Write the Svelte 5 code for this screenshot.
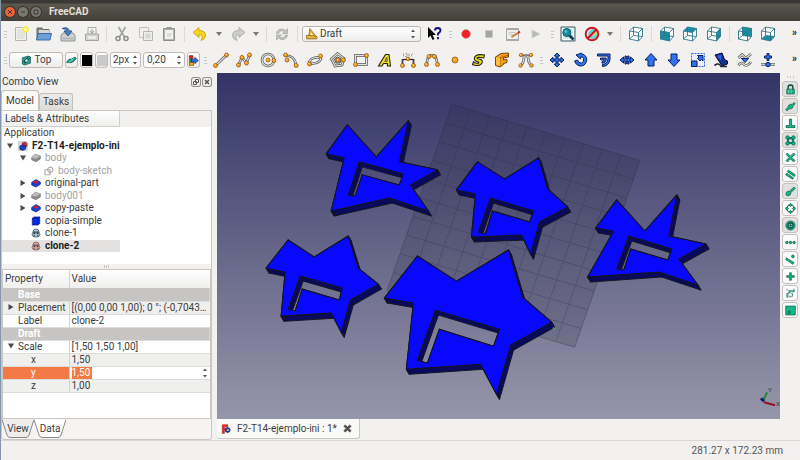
<script lang="ts">
  type Point = [number, number];

  interface Solid {
    outline: Point[];
    hole: Point[];
  }

  interface TreeItem {
    label: string;
    icon: string;
    depth: number;
    arrow?: "open" | "closed";
    hidden?: boolean;
    bold?: boolean;
  }

  let line = $state("2px");
  let textSize = $state("0,20");
  let scaleY = $state("1,50");
  let selected = $state("clone-2");

  const node = (x: number, y: number, r = 2) =>
    `<circle cx="${x}" cy="${y}" r="${r}" fill="#f9a11b" stroke="#8a4a00" stroke-width=".7"/><circle cx="${x - 0.5}" cy="${y - 0.6}" r=".7" fill="#ffe08a"/>`;

  const wire = (d: string) =>
    `<path d="${d}" fill="none" stroke="#55585a" stroke-width="2.6"/><path d="${d}" fill="none" stroke="#dfe1de" stroke-width="1.2"/>`;

  const cube = (face: string) =>
    `<path d="M1.500 5L5.500 1L14.500 2.500V10.500L10.500 15L1.500 13Z" fill="#fff"/>${face}<path d="M1.500 5L10.500 6.500V15L1.500 13ZM1.500 5L5.500 1L14.500 2.500L10.500 6.500M14.500 2.500V10.500L10.500 15M5.500 1V9.500L1.500 13M5.500 9.500L14.500 10.500" fill="none" stroke="#2d7688" stroke-width=".9"/>`;

  const blue = `fill="#2f74ee" stroke="#0b1c5e" stroke-width="1" stroke-linejoin="round"`;
  const green = `fill="#12b886" stroke="#08463a" stroke-width=".9" stroke-linejoin="round"`;

  const icons: Record<string, string> = {
    new: `<path d="M2.500 1.500h11v13h-11z" fill="#f2f2f0" stroke="#b4b4b0"/><path d="M4 3h8v10H4z" fill="#e3e3e0"/><circle cx="12.500" cy="3.500" r="3.200" fill="#f7ee3c"/><circle cx="12.500" cy="3.500" r="1.300" fill="#fffde0"/>`,
    open: `<path d="M1 13V2h5l1 1.500h6V13z" fill="#8a8c88" stroke="#666"/><path d="M3 4h10v5H3z" fill="#d8d8d6"/><path d="M.5 14l1.500-6.500h13.500L14 14z" fill="#6f9fd8" stroke="#3a6aa8"/>`,
    save: `<path d="M1 9.500L3 7h10l2 2.500V15H1z" fill="#d0d1cf" stroke="#8e908c"/><path d="M2.500 11.500h11v2h-11z" fill="#b6b8b4"/><path d="M2 2.500Q8 0 9.500 5H12L8 10L4 5h2.500Q6 2.500 2 2.500z" fill="#4a80c0" stroke="#204a87" stroke-width=".8"/>`,
    print: `<path d="M4 8V1.500h8V8" fill="#f4f4f3" stroke="#aaa"/><path d="M8 3v4M6 5l2 2.500L10 5" fill="none" stroke="#999"/><path d="M1.500 8h13v6.500h-13z" fill="#d4d4d2" stroke="#a2a29f"/><path d="M4 10.500h8v2H4z" fill="#f5f5f5"/>`,
    cut: `<path d="M4.500 1l6 10M11.500 1l-6 10" stroke="#a2a4a1" stroke-width="1.700"/><circle cx="4" cy="12.500" r="2" fill="none" stroke="#8b8d89" stroke-width="1.500"/><circle cx="12" cy="12.500" r="2" fill="none" stroke="#8b8d89" stroke-width="1.500"/>`,
    copy: `<path d="M1.500 1.500h9v10h-9z" fill="#f0f0ef" stroke="#c3c3c1"/><path d="M5.500 5.500h9v9h-9z" fill="#eee" stroke="#b5b5b2"/><path d="M7.500 7.500h5v5h-5z" fill="#d6d6d4"/>`,
    paste: `<path d="M2.500 2.500h11v12h-11z" fill="#b5b5b2" stroke="#8d8d8a"/><path d="M4 4h8v9H4z" fill="#f1f1f0"/><path d="M5.500 1h5v2.500h-5z" fill="#999"/><path d="M6 8h5M6 10h4" stroke="#c8c8c6"/>`,
    undo: `<path d="M1 6.500L7 1.500V4.500Q14 4.500 13.500 10Q13 13.500 9 14.500Q12 9 7 8.500V11.500Z" fill="#f5d327" stroke="#d2a600" stroke-width=".9"/>`,
    redo: `<path d="M15 6.500L9 1.500V4.500Q2 4.500 2.500 10Q3 13.500 7 14.500Q4 9 9 8.500V11.500Z" fill="#ccc" stroke="#adadab" stroke-width=".9"/>`,
    refresh: `<path d="M2.500 7.500Q3 3 8 3Q10 3 11.500 4.500L13.500 2.500V7.500H8.500L10.500 5.500Q6 3.500 4.500 7.500ZM13.500 9Q13 13.500 8 13.500Q6 13.500 4.500 12L2.500 14V9H7.500L5.500 11Q10 13 11.500 9Z" fill="#c3c4c2" stroke="#a2a3a0" stroke-width=".7"/>`,
    whats: `<path d="M2 1v11l2.600-2.500L6.500 14l2-1-2-4H10z" fill="#000"/><path d="M9 4.500Q9 2 11.700 2Q14.500 2 14.500 4.500Q14.500 6 12 7.500V9.500M12 11v2.200" fill="none" stroke="#12127c" stroke-width="1.900"/>`,
    record: `<circle cx="8" cy="8" r="4.300" fill="#ed2323" stroke="#d66" stroke-width=".6"/>`,
    stop: `<path d="M4.500 4.500h7v7h-7z" fill="#a5a6a4" stroke="#c9c9c7"/>`,
    macro: `<path d="M1.500 3h12v11h-12z" fill="#eeeeec" stroke="#a8a8a5"/><path d="M1.500 2h12v2h-12zM1 13h13v2H1z" fill="#aaa"/><path d="M3.500 6.500h7M3.500 8.500h5" stroke="#c8c8c5"/><path d="M6.500 11L14 6.500" stroke="#c17b38" stroke-width="1.900"/><path d="M13 7l2-1.300" stroke="#cc3322" stroke-width="2"/>`,
    play: `<path d="M4 4l8 4-8 4z" fill="#b9bab8" stroke="#cfcfcd"/>`,
    fit: `<path d="M1 1h14v14H1z" fill="#d7eaee" stroke="#42616b"/><path d="M3 2.500h10M3 13.500h10M2.500 3v10M13.500 3v10" stroke="#fff"/><path d="M9 9l4.500 4.500" stroke="#08444f" stroke-width="2.700"/><circle cx="6.800" cy="6.500" r="4" fill="#178ea3" stroke="#0c5667"/><circle cx="5.800" cy="5.500" r="1.400" fill="#54c1cf"/>`,
    style: `<path d="M4.500 6l4-3.500 4.500 2v6l-4 3-4.500-2z" fill="#64d0de"/><path d="M8 6h6l-5 5z" fill="#efd65d"/><circle cx="8" cy="8" r="6.300" fill="none" stroke="#ca171d" stroke-width="1.900"/><path d="M3.500 12.500l9-9" stroke="#ca171d" stroke-width="1.900"/>`,
    iso: cube(""),
    front: cube(`<path d="M1.500 5L10.500 6.500V15L1.500 13Z" fill="#198da3"/>`),
    top: cube(`<path d="M1.500 5L5.500 1L14.500 2.500L10.500 6.500Z" fill="#198da3"/>`),
    right: cube(`<path d="M10.500 6.500L14.500 2.500V10.500L10.500 15Z" fill="#198da3"/>`),
    rear: cube(`<path d="M5.500 1L14.500 2.500V10.500L5.500 9.500Z" fill="#198da3"/>`),
    bottom: cube(`<path d="M1.500 13L5.500 9.500L14.500 10.500L10.500 15Z" fill="#198da3"/>`),
    line: wire("M2.500 13.500L13.500 3") + node(2.5, 13.5) + node(13.5, 3),
    polyline: wire("M2.500 13L6 5.500L10.500 11L13.500 3") + node(2.5, 13) + node(6, 5.5) + node(10.5, 11) + node(13.5, 3),
    circle: wire("M14 8A6 6 0 1 1 2 8A6 6 0 1 1 14 8") + node(8, 8) + node(14, 8.5),
    arc: wire("M2.500 3.500Q12 3.500 13 13") + node(2.5, 3) + node(4, 8) + node(13.2, 13.5),
    ellipse: wire("M2 11Q3 6 9 5.500Q14 5 14 7Q12 11 6 11.500Q2.500 12 2 11") + node(13.5, 4) + node(2.5, 12),
    polygon: wire("M7.500 1.500L14 6.500L12 13L5 14L1.500 7Z") + `<path d="M7.500 5l3.500 2-1 4H6L4.500 7z" fill="#bbb" stroke="#555"/>` + node(8, 8) + node(13.5, 8),
    rect: wire("M2.500 3.500H13.500V12.500H2.500Z") + node(13.5, 3.5) + node(2.5, 12.5),
    text: `<path d="M1.500 14L8.500 2.500H12L13.500 14H10.500L10.300 11.500H6.500L5 14Z" fill="#f0dc1c" stroke="#222" stroke-width="1.100"/><path d="M7.800 9.300L9.800 5.500L10.100 9.300Z" fill="#fff" stroke="#222" stroke-width=".8"/>`,
    dimension: `<path d="M2.500 13V7M13.500 13V7" stroke="#444" stroke-width="1.800"/><path d="M3.500 1.500v3M5.500 1.500h1.500v3h-2M9 1.500v3M11 4.500l1.500-3" stroke="#999" stroke-width=".9" fill="none"/><path d="M3 7.500h10" stroke="#222" stroke-width="1.200"/>` + node(8, 7, 1.7) + node(2.5, 13.5) + node(13.5, 13.5),
    bspline: wire("M2.500 13Q3.500 3 8 3Q12.500 3 13.500 13") + node(2.5, 12.5) + node(5, 4.5) + node(10.5, 4.5) + node(13.5, 12.5),
    point: node(8, 8, 3),
    shapestring: `<path d="M13.500 3L12.800 6L9.500 5.500Q6 5 6 6.200Q6.500 7 9 7.300Q12 8 11 11Q9.500 13.800 5.500 13.500Q3 13.500 1.500 12.500L2.500 9.800Q4 11.200 6.500 11.200Q8.500 11 7.500 10Q2.500 9 3.500 5.500Q4.500 2.800 9 2.600Q12 2.500 13.500 3Z" fill="#f0dc1c" stroke="#222" stroke-width="1.100"/>`,
    facebinder: `<path d="M1.500 5L7 1.500L14.500 1V5L9.500 6V8L13 7.500V10.500L9.500 11.500V12.500L6 15L1.500 13.500Z" fill="#f0a019" stroke="#7a4300"/><path d="M6 15V6L14.500 3" fill="none" stroke="#a35d00"/><path d="M2 5.500L6 6.500V14L2 13Z" fill="#ffbf3c"/>`,
    bezier: wire("M2.500 13.500Q6 11 6 4.500Q8 3 10 4.500Q10 11 13.500 13.500") + `<path d="M2.500 3h11" stroke="#666"/>` + node(3, 3, 1.7) + node(13, 3, 1.7) + node(2.5, 13.5, 1.7) + node(13.5, 13.5, 1.7),
    move: `<path d="M8 1l2.700 3H9v3h3V5.300L15 8l-3 2.700V9H9v3h1.700L8 15l-2.700-3H7V9H4v1.700L1 8l3-2.700V7h3V4H5.300z" ${blue}/>`,
    rotate: `<path d="M8 1.500Q15 3.500 13.500 9.500Q11.500 15 6 13.800Q2.500 12.500 1.500 9L4.500 8Q5.500 11.500 8.500 11Q11.500 9.500 10.500 6.500Q9.500 5 8 4.700L7.500 7L3 3L8.500 1z" ${blue}/>`,
    offset: `<path d="M1.500 2H14V7.500Q13 14 6.500 14.500V12.500Q11.500 11.500 12 7V4H1.500ZM4.500 6H10.200V8Q9.500 11 6 11.200V9.500Q8 9 8.200 7.800H4.500Z" ${blue}/>`,
    trimex: `<path d="M1 8l3.500-3v2H6V4h1.300v3h1.400V4H10v3h1.500V5L15 8l-3.500 3V9H10v3H8.700V9H7.300v3H6V9H4.500v2z" ${blue}/>`,
    up: `<path d="M8 1.500L14 8h-3v6H5V8H2z" ${blue}/>`,
    down: `<path d="M8 14.500L2 8h3V2h6v6h3z" ${blue}/>`,
    scale: `<path d="M1.500 1.500h13v13h-13z" fill="#eaf1fe" stroke="#2f64dc" stroke-dasharray="2 1"/><path d="M1.500 9h5.500v5.500H1.500z" ${blue}/><path d="M7.500 6.500L9 5L7.500 3.500H13V9L11.500 7.500L10 9z" ${blue}/>`,
    edit: `<path d="M2 3L9 1L11.500 7.500L14.500 9V12L9 14L6.500 10Z" fill="#16308f" stroke="#070d3d"/><path d="M4 4L8 8.500L8.500 2.500Z" fill="#3064e8"/><path d="M1.500 13.500Q6 10 8 14.500H14" fill="none" stroke="#26282d" stroke-width="1.700"/>`,
    wiretospline: wire("M1.500 6L5 2.500L9 6L14 2") + wire("M1.500 13.500Q4 9 7 12.500Q10 15 14 10") + `<path d="M4.500 6.500h7L8 10.500z" ${blue}/>`,
    addpoint: `<path d="M1 12.500h14" stroke="#6d6f70" stroke-width="2.600"/><path d="M1 12.500h14" stroke="#c8cac9" stroke-width="1"/><path d="M7 1.500h2v2.500h2.500v2H9v2.500H7V6H4.500V4H7z" ${blue}/><circle cx="8" cy="12.500" r="2.200" ${blue}/>`,
    plane: `<path d="M2 4L11 1.500L14 3L13.500 12L5 14.500L2 13Z" fill="#2aa59a" stroke="#0c4d4b"/><path d="M11 2L4 9L6 12L13 4" fill="none" stroke="#083b3f" stroke-width="1.400"/><circle cx="8" cy="8" r="2.300" fill="#f0f4f2" stroke="#0c4d4b"/>`,
    pen: `<path d="M1 11Q3 5 8 6L13 3L15 5L11 9.500Q7 12 4 11Z" fill="#18a18c" stroke="#0a5045"/><path d="M4 10.500L11 5.500" stroke="#bff" />`,
    apply: `<path d="M2 1h5v4H2z" fill="#e22" stroke="#611"/><path d="M2 6h4v4H2z" fill="#1aa84a" stroke="#063"/><path d="M2 11h6v4H2z" fill="#fb0" stroke="#630"/><path d="M5 6h5V3.500L15 8l-5 4.500V10H5z" ${blue}/>`,
    draft: `<path d="M5 .5L14 12H3.500Z" fill="#e6ae38" stroke="#9a6611"/><path d="M6.500 6L9.500 10H6Z" fill="#fff"/><path d="M.5 10h8l6 1.500v3H1z" fill="#e8b638" stroke="#8d6110"/>`,
    freecad: `<path d="M2 1h9v3.500H5.500V7H10v3H5.500v5H2z" fill="#e8281c" stroke="#991408" stroke-width=".7"/><circle cx="10.500" cy="9.500" r="3" fill="none" stroke="#173c94" stroke-width="2.300"/><path d="M10.500 4.500v2M10.500 12.500v2M5.500 9.500h2M13.500 9.500h2M7 6l1.500 1.500M14 6l-1.500 1.500M7 13l1.500-1.500M14 13l-1.500-1.500" stroke="#173c94" stroke-width="1.500"/>`,
    doc: `<path d="M1 1h14v14H1z" fill="#d9d9e0" stroke="#b9b9c0"/><path d="M7 3l5-1 2 2v5l-5 2-2-2z" fill="#e12026" stroke="#7a0b18"/><path d="M3 8l4-2 5 2v5l-5 2-4-2z" fill="#1d3fc0" stroke="#0a1766"/>`,
    bodygrey: `<path d="M1 7L7 2L15 4.500V9.500L8 14L1 11Z" fill="#8a8a8a" stroke="#777"/><path d="M1 7L7 2L15 4.500L8 9Z" fill="#bbb"/>`,
    sketch: `<path d="M1.500 6h8v8h-8z" fill="none" stroke="#aaa" stroke-width="1.700"/><circle cx="10" cy="6" r="4.200" fill="none" stroke="#aaa" stroke-width="1.700"/>`,
    part: `<path d="M1 7L8 2.500L15 6.500V10L8 14.500L1 11Z" fill="#1440d8" stroke="#0b1c70"/><path d="M4 6.500L8 4l4.500 2.500L8 9.500Z" fill="#e01c24"/>`,
    bluebox: `<path d="M2 4L5 1.500H14V12L11 14.500H2Z" fill="#0730ee" stroke="#020f66"/><path d="M2 4H11V14.500M11 4L14 1.500" fill="none" stroke="#020f66"/>`,
    clone: `<path d="M3 7Q3 1.500 8 1.500Q13 1.500 13 7L14.500 11Q13 15 8 14.500Q3 15 1.500 11Z" fill="#a9c3df" stroke="#26374c"/><path d="M3 6.500h10M5 14V11M11 14V11" stroke="#26374c" stroke-width="1.500"/><circle cx="5.500" cy="8.500" r="1.600" fill="#233"/><circle cx="10.500" cy="8.500" r="1.600" fill="#233"/>`,
    clonesel: `<path d="M3 7Q3 1.500 8 1.500Q13 1.500 13 7L14.500 11Q13 15 8 14.500Q3 15 1.500 11Z" fill="#dba996" stroke="#5d4652"/><path d="M3 6.500h10M5 14V11M11 14V11" stroke="#5d4652" stroke-width="1.500"/><circle cx="5.500" cy="8.500" r="1.600" fill="#446"/><circle cx="10.500" cy="8.500" r="1.600" fill="#446"/>`,
    lock: `<path d="M4.500 8V5Q4.500 1.500 8 1.500T11.500 5V8" fill="none" stroke="#08463a" stroke-width="2"/><path d="M2.500 7.500h11v7h-11z" ${green}/><path d="M5 8v6M9 8v6" stroke="#7ee0c4"/>`,
    midpoint: `<path d="M1 12.500L4 9.500L5 6.500L8.500 4.500L10.500 5L13 2L15 4L12 7L11 10L7.500 11.500L5.500 11.500L3 14.500Z" ${green}/>`,
    perpendicular: `<path d="M6.500 1.500h3v9.500h5v3h-13v-3h5z" ${green}/>`,
    gridsnap: `<path d="M4.500 4.500h7v7h-7z" fill="none" stroke="#08463a" stroke-width="3"/><path d="M4.500 4.500h7v7h-7z" fill="none" stroke="#12b886" stroke-width="1.500"/><circle cx="3.700" cy="3.700" r="2.600" ${green}/><circle cx="12.300" cy="3.700" r="2.600" ${green}/><circle cx="3.700" cy="12.300" r="2.600" ${green}/><circle cx="12.300" cy="12.300" r="2.600" ${green}/>`,
    intersection: `<path d="M3.500 1.500L8 6L12.500 1.500L14.500 3.500L10 8L14.500 12.500L12.500 14.500L8 10L3.500 14.500L1.500 12.500L6 8L1.500 3.500Z" ${green}/>`,
    parallel: `<path d="M5 1.500L15 8.500L13.500 11L3.500 4ZM2.500 6L12.500 13L11 15L1 8.500Z" ${green}/>`,
    endpoint: `<path d="M13 1.500L15 3.500L8.500 9.500Q8.500 14 4.500 14.500Q.5 13.500 1.500 10Q3 7 6.500 7.500Z" ${green}/>`,
    angle: `<circle cx="8" cy="8" r="5.300" fill="none" stroke="#08463a" stroke-width="1.200"/><path d="M5.500 2.800l2.500-2.500 2.500 2.500L8 5.300zM5.500 13.200l2.500-2.500 2.500 2.500L8 15.700zM.3 8l2.500-2.500L5.300 8l-2.500 2.500zM10.700 8l2.500-2.500L15.700 8l-2.500 2.500z" ${green}/>`,
    center: `<circle cx="8" cy="8" r="6.700" ${green}/><circle cx="8" cy="8" r="3.800" fill="#7fbbab" stroke="#08463a" stroke-width="1.500"/><circle cx="8" cy="8" r="1.500" fill="#08463a"/>`,
    extension: `<circle cx="2.800" cy="8" r="1.900" ${green}/><circle cx="8" cy="8" r="1.900" ${green}/><circle cx="13.200" cy="8" r="1.900" ${green}/>`,
    near: `<path d="M2 5.500L13 12.500L11.500 15L1 8Z" ${green}/><circle cx="11.500" cy="3.500" r="2" ${green}/>`,
    ortho: `<path d="M6.800 2.500h2.400v4.300h4.300v2.400H9.200v4.300H6.800V9.200H2.500V6.800h4.300z" ${green}/>`,
    special: `<path d="M5.500 3.500h8v2h-6v2h-3v6h-2v-6h3z" fill="#3fae93" stroke="#38746a" stroke-width=".7"/><path d="M9 8h2v4H7v2M13 1v5M3 1v3" fill="none" stroke="#38746a" stroke-width="1.200"/>`,
    workplane: `<path d="M1 1.500h14v13H1z" ${green}/><circle cx="6" cy="10.500" r="1.700" fill="none" stroke="#08463a"/>`
  };

  const fileTools = [
    ["new", "open", "save", "print"],
    ["cut", "copy", "paste"]
  ];
  const macroTools = ["record", "stop", "macro", "play"];
  const drawTools = ["line", "polyline", "circle", "arc", "ellipse", "polygon", "rect", "text", "dimension", "bspline", "point", "shapestring", "facebinder", "bezier"];
  const modTools = ["move", "rotate", "offset", "trimex", "up", "down", "scale", "edit", "wiretospline", "addpoint"];
  const snapTools = ["lock", "midpoint", "perpendicular", "gridsnap", "intersection", "parallel", "endpoint", "angle", "center", "extension", "near", "ortho", "special", "workplane"];
  const activeSnaps = ["lock", "midpoint", "gridsnap", "endpoint", "center"];

  const tree: TreeItem[] = [
    { label: "F2-T14-ejemplo-ini", icon: "doc", depth: 0, arrow: "open", bold: true },
    { label: "body", icon: "bodygrey", depth: 1, arrow: "open", hidden: true },
    { label: "body-sketch", icon: "sketch", depth: 2, hidden: true },
    { label: "original-part", icon: "part", depth: 1, arrow: "closed" },
    { label: "body001", icon: "bodygrey", depth: 1, arrow: "closed", hidden: true },
    { label: "copy-paste", icon: "part", depth: 1, arrow: "closed" },
    { label: "copia-simple", icon: "bluebox", depth: 1 },
    { label: "clone-1", icon: "clone", depth: 1 },
    { label: "clone-2", icon: "clonesel", depth: 1 }
  ];

  const solids: Solid[] = [
    {
      outline: [[347, 125], [376, 157], [408, 121], [399, 162], [437, 170], [410, 185], [428, 211], [389, 198], [331, 211], [344, 158], [326, 154]],
      hole: [[359, 162], [403, 174], [399, 185], [362, 175], [355, 196], [348, 195]]
    },
    {
      outline: [[477, 162], [504, 179], [538, 158], [547, 189], [567, 207], [539, 222], [530, 254], [521, 235], [471, 237], [475, 194], [456, 190]],
      hole: [[490, 198], [533, 211], [529, 222], [492, 211], [485, 234], [478, 232]]
    },
    {
      outline: [[616, 200], [644, 231], [676, 195], [668, 236], [705, 244], [678, 259], [697, 285], [658, 272], [587, 277], [613, 231], [595, 228]],
      hole: [[628, 236], [671, 249], [667, 260], [630, 249], [623, 270], [616, 269]]
    },
    {
      outline: [[288, 240], [314, 257], [348, 236], [358, 268], [378, 284], [350, 300], [341, 332], [331, 313], [281, 316], [285, 272], [266, 268]],
      hole: [[300, 276], [342, 288], [339, 300], [302, 289], [295, 311], [288, 309]]
    },
    {
      outline: [[417, 256], [456, 281], [508, 250], [522, 297], [551, 322], [510, 345], [496, 394], [480, 364], [406, 369], [413, 303], [384, 298]],
      hole: [[435, 310], [499, 329], [493, 346], [439, 329], [427, 363], [417, 360]]
    }
  ];

  const DEPTH: Point = [3, 5];

  const toPath = (pts: Point[]) => "M" + pts.map((p) => p.join(" ")).join("L") + "Z";

  // one quad per edge, swept along the extrusion direction
  function walls(pts: Point[]) {
    return pts.map((a, i) => {
      const b = pts[(i + 1) % pts.length];
      return toPath([a, b, [b[0] + DEPTH[0], b[1] + DEPTH[1]], [a[0] + DEPTH[0], a[1] + DEPTH[1]]]);
    });
  }

  function gridPath(steps: number) {
    let d = "";
    for (let i = 0; i <= steps; i++) {
      const p = (i * 10) / steps;
      d += `M${p} 0V10M0 ${p}H10`;
    }
    return d;
  }
</script>

{#snippet icon(name: string)}
  <svg class="icon" viewBox="0 0 16 16" aria-hidden="true">{@html icons[name]}</svg>
{/snippet}

{#snippet tool(name: string)}
  <button class="tool" aria-label={name}>{@render icon(name)}</button>
{/snippet}

{#snippet drop()}
  <button class="drop" aria-label="more"><svg viewBox="0 0 8 6"><path d="M1 1h6L4 5z" fill="#777" /></svg></button>
{/snippet}

{#snippet spinner()}
  <svg class="spinner" viewBox="0 0 6 12" aria-hidden="true">
    <path d="M1 4L3 1.500L5 4ZM1 8L3 10.500L5 8Z" fill="#555" />
  </svg>
{/snippet}

{#snippet arrow(state?: string)}
  <svg class="arrow" viewBox="0 0 8 8" aria-hidden="true">
    {#if state === "open"}
      <path d="M1 1.500h6L4 6.500z" />
    {:else if state === "closed"}
      <path d="M1.500 1v6L6.500 4z" />
    {/if}
  </svg>
{/snippet}

<div class="window">
  <header class="titlebar">
    <button class="wbtn close" aria-label="Close"><svg viewBox="0 0 10 10"><path d="M3 3l4 4M7 3l-4 4" /></svg></button>
    <button class="wbtn" aria-label="Minimize"><svg viewBox="0 0 10 10"><path d="M3 5h4" /></svg></button>
    <button class="wbtn" aria-label="Maximize"><svg viewBox="0 0 10 10"><path d="M3 3h4v4H3z" /></svg></button>
    <h1>FreeCAD</h1>
  </header>

  <div class="toolbar">
    <span class="grip"></span>
    {#each fileTools as group}
      {#each group as name}{@render tool(name)}{/each}
      <span class="sep"></span>
    {/each}
    {@render tool("undo")}
    {@render drop()}
    {@render tool("redo")}
    {@render drop()}
    <span class="sep"></span>
    {@render tool("refresh")}
    <span class="sep"></span>
    <div class="combo">
      {@render icon("draft")}
      <select aria-label="Workbench"><option>Draft</option></select>
      {@render spinner()}
    </div>
    {@render tool("whats")}
    <span class="grip"></span>
    {#each macroTools as name}{@render tool(name)}{/each}
    <span class="grip"></span>
    {@render tool("fit")}
    {@render tool("style")}
    {@render drop()}
    <span class="sep"></span>
    {@render tool("iso")}
    <span class="sep"></span>
    {@render tool("front")}
    {@render tool("top")}
    {@render tool("right")}
    <span class="sep"></span>
    {@render tool("rear")}
    {@render tool("bottom")}
    <button class="more">»</button>
  </div>

  <div class="toolbar">
    <span class="grip"></span>
    <div class="tray">
      <button class="box plane">{@render icon("plane")}Top</button>
      <button class="box" aria-label="Construction mode">{@render icon("pen")}</button>
      <button class="box swatch black" aria-label="Line color"><span></span></button>
      <button class="box swatch" aria-label="Face color"><span></span></button>
      <div class="spin small"><input aria-label="Line width" bind:value={line} />{@render spinner()}</div>
      <div class="spin"><input aria-label="Text size" bind:value={textSize} />{@render spinner()}</div>
      <button class="box" aria-label="Apply style">{@render icon("apply")}</button>
    </div>
    <span class="grip"></span>
    {#each drawTools as name}{@render tool(name)}{/each}
    <span class="grip"></span>
    {#each modTools as name}{@render tool(name)}{/each}
    <button class="more">»</button>
  </div>

  <main>
    <aside>
      <div class="dock-title">
        <span>Combo View</span>
        <button aria-label="Float"><svg viewBox="0 0 8 8"><path d="M3.500 1.500h3v3h-3zM1.500 3.500h3v3h-3z" /></svg></button>
        <button aria-label="Close panel"><svg viewBox="0 0 8 8"><path d="M2 2l4 4M6 2l-4 4" stroke-width="1.500" /></svg></button>
      </div>
      <div class="tabs">
        <button class="active">Model</button>
        <button>Tasks</button>
      </div>
      <div class="panel">
        <div class="tree-box">
          <div class="tree-head"><span>Labels &amp; Attributes</span></div>
          <ul class="tree">
            <li><span class="root">Application</span></li>
            {#each tree as item}
              <li>
                <button
                  class="row depth{item.depth}"
                  class:hidden={item.hidden}
                  class:bold={item.bold}
                  class:selected={selected === item.label}
                  onclick={() => (selected = item.label)}
                >
                  {@render arrow(item.arrow)}
                  {@render icon(item.icon)}
                  {item.label}
                </button>
              </li>
            {/each}
          </ul>
        </div>
        <div class="splitter"></div>
        <div class="props">
          <table>
            <thead>
              <tr><th>Property</th><th>Value</th></tr>
            </thead>
            <tbody>
              <tr class="group"><td colspan="2">Base</td></tr>
              <tr class="alt parent"><td>{@render arrow("closed")}Placement</td><td>[(0,00 0,00 1,00); 0 °; (-0,7043…</td></tr>
              <tr><td>Label</td><td>clone-2</td></tr>
              <tr class="group"><td colspan="2">Draft</td></tr>
              <tr class="parent"><td>{@render arrow("open")}Scale</td><td>[1,50 1,50 1,00]</td></tr>
              <tr class="alt sub"><td>x</td><td>1,50</td></tr>
              <tr class="sub editing">
                <td>y</td>
                <td><div class="editor"><input aria-label="y" bind:value={scaleY} />{@render spinner()}</div></td>
              </tr>
              <tr class="alt sub"><td>z</td><td>1,00</td></tr>
            </tbody>
          </table>
        </div>
        <div class="bottom-tabs">
          <button>
            <svg viewBox="0 0 32 20"><path d="M0 .500L5 16Q6 18.500 8 18.500H24Q26 18.500 27 16L32 .500" /></svg>
            <span>View</span>
          </button>
          <button class="active">
            <svg viewBox="0 0 32 20"><path d="M0 .500L5 16Q6 18.500 8 18.500H24Q26 18.500 27 16L32 .500" /></svg>
            <span>Data</span>
          </button>
        </div>
      </div>
    </aside>

    <section class="document">
      <svg class="view3d" viewBox="217 73 562 346" preserveAspectRatio="xMidYMid slice" role="img" aria-label="3D view">
        <g transform="matrix(18.73 5.6 -6.5 18.63 451.7 104.7)">
          <path class="grid-fill" d="M0 0H10V10H0Z" />
          <path class="grid-fine" d={gridPath(100)} />
          <path class="grid-main" d={gridPath(10)} />
        </g>
        {#each solids as solid}
          {#each [...walls(solid.outline), ...walls(solid.hole)] as d}
            <path class="wall" {d} />
          {/each}
          <path class="face" d={toPath(solid.outline) + toPath(solid.hole)} />
        {/each}
        <path d="M552 328h3M553 327v3" stroke="#2dbb3d" />
        <g class="axes">
          <path d="M762 401L766 392" stroke="#1f8a28" />
          <path d="M763 402L774 405" stroke="#8d1420" />
          <path d="M763 401L760 398" stroke="#1a1a8c" stroke-width="3" />
          <text x="767" y="392">Y</text>
          <text x="775" y="406">X</text>
        </g>
      </svg>
      <div class="doc-tabs">
        <button>
          {@render icon("freecad")}
          <span>F2-T14-ejemplo-ini : 1*</span>
          <svg class="x" viewBox="0 0 10 10"><path d="M1.500 1.500l7 7M8.500 1.500l-7 7" /></svg>
        </button>
      </div>
    </section>

    <nav class="snapbar" aria-label="Snap">
      <span class="grip flat"></span>
      {#each snapTools as name}
        <button class:on={activeSnaps.includes(name)} aria-label={name}>{@render icon(name)}</button>
      {/each}
    </nav>
  </main>

  <footer>281.27 x 172.23 mm</footer>
</div>

<style>
  :global(body) {
    background: #f2f1f0;
  }

  .window {
    box-sizing: border-box;
    display: flex;
    flex-direction: column;
    min-height: 100vh;
    border-left: 1px solid #8297ab;
    background: #f2f1f0;
    color: #3c3c3c;
    font-family: Roboto, "Noto Sans", sans-serif;
    font-size: 10px;
    line-height: 12px;
  }

  button,
  input,
  select {
    margin: 0;
    padding: 0;
    border: 0;
    background: none;
    color: inherit;
    font: inherit;
  }

  .icon {
    display: block;
    flex: none;
    width: 16px;
    height: 16px;
  }

  .titlebar {
    box-sizing: border-box;
    display: flex;
    align-items: center;
    gap: 3px;
    height: 21px;
    padding: 3px 4px 0;
    background: linear-gradient(#3a3935 0, #3a3935 3px, #5a584f 4px, #403f3a 100%);
  }

  .wbtn {
    width: 10px;
    height: 10px;
    border-radius: 50%;
    background: #7b786f;
    box-shadow: 0 0 0 1px #35342f;
  }

  .wbtn svg {
    display: block;
    fill: none;
    stroke: #3a3935;
  }

  .close {
    background: #f0613a;
  }

  h1 {
    margin: 0 0 0 5px;
    color: #e4e0d6;
    font-size: 10px;
    font-weight: 700;
  }

  .toolbar {
    display: flex;
    align-items: center;
    height: 26px;
  }

  .tool {
    display: flex;
    flex: 1 1 0;
    justify-content: center;
    min-width: 0;
  }

  .drop {
    width: 14px;
  }

  .drop svg {
    display: block;
    width: 8px;
    height: 6px;
    margin: auto;
  }

  .sep {
    width: 1px;
    height: 16px;
    margin: 0 3px;
    background: #dcdad8;
  }

  .grip {
    flex: none;
    width: 3px;
    height: 7px;
    margin: 0 2px 0 3px;
    background: repeating-linear-gradient(#c9c7c5 0 1px, transparent 1px 3px);
  }

  .grip.flat {
    width: 7px;
    height: 2px;
    margin: 3px 0 2px;
    background: repeating-linear-gradient(90deg, #c9c7c5 0 1px, transparent 1px 3px);
  }

  .more {
    width: 20px;
    padding: 0 3px 2px 0;
    color: #222;
    font-weight: 700;
    text-align: right;
  }

  .spinner {
    flex: none;
    width: 6px;
    height: 12px;
  }

  .combo {
    box-sizing: border-box;
    display: flex;
    align-items: center;
    width: 119px;
    height: 16px;
    margin: 0 1px;
    padding: 0 4px 0 3px;
    border: 1px solid #b9b6b2;
    border-radius: 3px;
    background: linear-gradient(#fff, #ededec);
  }

  .combo .icon {
    width: 12px;
    height: 12px;
  }

  select {
    flex: 1;
    min-width: 0;
    appearance: none;
    padding-left: 2px;
  }

  .tray {
    display: flex;
    gap: 2px;
    margin-right: 1px;
  }

  .box,
  .spin {
    box-sizing: border-box;
    display: flex;
    align-items: center;
    justify-content: center;
    height: 16px;
    border: 1px solid #bfbcb8;
    border-radius: 3px;
    background: linear-gradient(#fff, #ececeb);
  }

  .box {
    width: 13px;
  }

  .box .icon {
    width: 11px;
    height: 11px;
  }

  .box.plane {
    gap: 3px;
    width: 54px;
  }

  .swatch span {
    width: 10px;
    height: 11px;
    background: #cacaca;
  }

  .swatch.black span {
    background: #000;
  }

  .spin {
    width: 42px;
    padding: 0 2px 0 3px;
    background: #fff;
  }

  .spin.small {
    width: 31px;
    padding-left: 2px;
  }

  .spin input {
    flex: 1;
    width: 0;
    min-width: 0;
  }

  main {
    display: flex;
    flex: 1;
  }

  aside {
    display: flex;
    flex-direction: column;
    flex: none;
    width: 211px;
    margin-right: 5px;
  }

  .dock-title {
    display: flex;
    align-items: center;
    gap: 3px;
    height: 17px;
    padding: 0 1px;
  }

  .dock-title span {
    flex: 1;
  }

  .dock-title button {
    box-sizing: border-box;
    width: 8px;
    height: 8px;
    border-radius: 2px;
    box-shadow: 0 0 0 1px #8f8d8a;
  }

  .dock-title svg {
    display: block;
    fill: none;
    stroke: #555;
  }

  .tabs {
    display: flex;
    align-items: flex-end;
    height: 20px;
  }

  .tabs button {
    box-sizing: border-box;
    width: 34px;
    height: 17px;
    border: 1px solid #c2bfbb;
    border-bottom: 0;
    border-radius: 3px 3px 0 0;
    background: linear-gradient(#ecebea, #dddbd9);
  }

  .tabs .active {
    width: 38px;
    height: 20px;
    background: #f9f9f8;
  }

  .panel {
    display: flex;
    flex: 1;
    flex-direction: column;
    border: 1px solid #c9c6c3;
    border-radius: 0 0 3px 3px;
    background: #f5f4f3;
  }

  .tree-box {
    background: #fff;
    min-height: 153px;
  }

  .tree-head {
    display: flex;
    height: 16px;
    background: #f1f0ef;
  }

  .tree-head span {
    box-sizing: border-box;
    width: 118px;
    padding: 2px 3px;
    border-right: 1px solid #d2d0cd;
    border-bottom: 1px solid #d2d0cd;
    background: linear-gradient(#fefefe, #f0efee);
    white-space: nowrap;
  }

  .tree {
    display: grid;
    grid-auto-rows: 1fr;
    height: 125px;
    margin: 0;
    padding: 0;
    list-style: none;
  }

  .tree li {
    display: flex;
    min-height: 0;
  }

  .root {
    padding-left: 2px;
  }

  .row {
    display: flex;
    align-items: center;
    gap: 4px;
    width: 118px;
    white-space: nowrap;
  }

  .row .icon {
    width: 10px;
    height: 10px;
  }

  .depth0 {
    padding-left: 4px;
  }

  .depth1 {
    padding-left: 17px;
  }

  .depth2 {
    padding-left: 30px;
  }

  .arrow {
    flex: none;
    width: 8px;
    height: 8px;
    fill: #4a4a4a;
  }

  .hidden {
    color: #a3a3a3;
  }

  .bold,
  .selected {
    color: #222;
    font-weight: 700;
  }

  .selected {
    background: #e3e2e1;
  }

  .splitter {
    height: 5px;
    background:
      repeating-linear-gradient(90deg, #c5c3c0 0 1px, transparent 1px 2px) center / 5px 3px no-repeat,
      #f2f1f0;
  }

  .props {
    flex: 1;
    border: 1px solid #c9c6c3;
    background: #fff;
  }

  table {
    width: 100%;
    border-collapse: collapse;
    table-layout: fixed;
  }

  th,
  td {
    box-sizing: border-box;
    height: 13px;
    padding: 0 0 0 2px;
    font-weight: 400;
    line-height: 12px;
    text-align: left;
    white-space: nowrap;
  }

  th {
    height: 18px;
    border-bottom: 1px solid #c9c6c3;
    background: linear-gradient(#fefefe, #f0efee);
  }

  th:first-child {
    width: 66px;
  }

  th:first-child,
  td:first-child {
    border-right: 1px solid #d5d3d1;
  }

  td {
    border-bottom: 1px solid #dedddb;
  }

  td:first-child {
    padding-left: 15px;
  }

  .parent td:first-child {
    padding-left: 4px;
  }

  td .arrow {
    margin-right: 3px;
  }

  .alt td {
    background: #efefee;
  }

  .group td {
    background: #c6c5c3;
    color: #fff;
    font-weight: 700;
  }

  .sub td:first-child {
    padding-left: 28px;
  }

  .editing td:first-child {
    background: #f37945;
    color: #fff;
  }

  .editor {
    display: flex;
    align-items: center;
    justify-content: space-between;
    height: 12px;
    padding-right: 2px;
  }

  .editor input {
    width: 20px;
    height: 12px;
    background: #f37945;
    color: #fff;
  }

  .bottom-tabs {
    display: flex;
    height: 20px;
  }

  .bottom-tabs button {
    position: relative;
    width: 32px;
    height: 20px;
  }

  .bottom-tabs svg {
    position: absolute;
    inset: 0;
    fill: #efeeed;
    stroke: #8b8987;
  }

  .bottom-tabs .active svg {
    fill: #fff;
  }

  .bottom-tabs span {
    position: relative;
  }

  .document {
    display: flex;
    flex: 1;
    flex-direction: column;
    min-width: 0;
  }

  .view3d {
    display: block;
    flex: 1 1 0;
    width: 100%;
    min-height: 0;
    background: linear-gradient(#333366, #9696aa);
  }

  .grid-fill {
    fill: rgba(50, 50, 70, 0.1);
  }

  .grid-fine,
  .grid-main {
    fill: none;
    stroke: #26263c;
    stroke-width: 1px;
    vector-effect: non-scaling-stroke;
  }

  .grid-fine {
    opacity: 0.12;
  }

  .grid-main {
    opacity: 0.25;
  }

  .wall {
    fill: #0a0a5c;
    stroke: #141420;
    stroke-linejoin: round;
  }

  .face {
    fill: #0808ff;
    fill-rule: evenodd;
    stroke: #14141e;
    stroke-linejoin: round;
  }

  .axes {
    fill: none;
    stroke-width: 2;
  }

  .axes text {
    fill: #222;
    font-family: "Liberation Sans", sans-serif;
    font-size: 6px;
  }

  .doc-tabs {
    height: 21px;
  }

  .doc-tabs button {
    display: flex;
    align-items: center;
    gap: 6px;
    height: 20px;
    padding: 0 7px 0 4px;
    border: 1px solid #c9c6c3;
    border-top: 0;
    border-left: 0;
    border-radius: 0 0 3px 3px;
    background: #f9f9f8;
  }

  .doc-tabs .icon {
    width: 10px;
    height: 10px;
  }

  .x {
    width: 9px;
    height: 9px;
    stroke: #555;
    stroke-width: 3;
  }

  .snapbar {
    display: flex;
    flex: none;
    flex-direction: column;
    align-items: center;
    gap: 1px;
    width: 20px;
  }

  .snapbar button {
    box-sizing: border-box;
    display: flex;
    align-items: center;
    justify-content: center;
    width: 16px;
    height: 16px;
    border: 1px solid #c4c1be;
    border-radius: 3px;
    background: #fcfcfc;
  }

  .snapbar .on {
    background: #e2e0de;
  }

  .snapbar .icon {
    width: 11px;
    height: 11px;
  }

  footer {
    box-sizing: border-box;
    height: 20px;
    padding: 4px 17px 0 0;
    border-top: 1px solid #dad8d6;
    color: #555;
    text-align: right;
  }
</style>
